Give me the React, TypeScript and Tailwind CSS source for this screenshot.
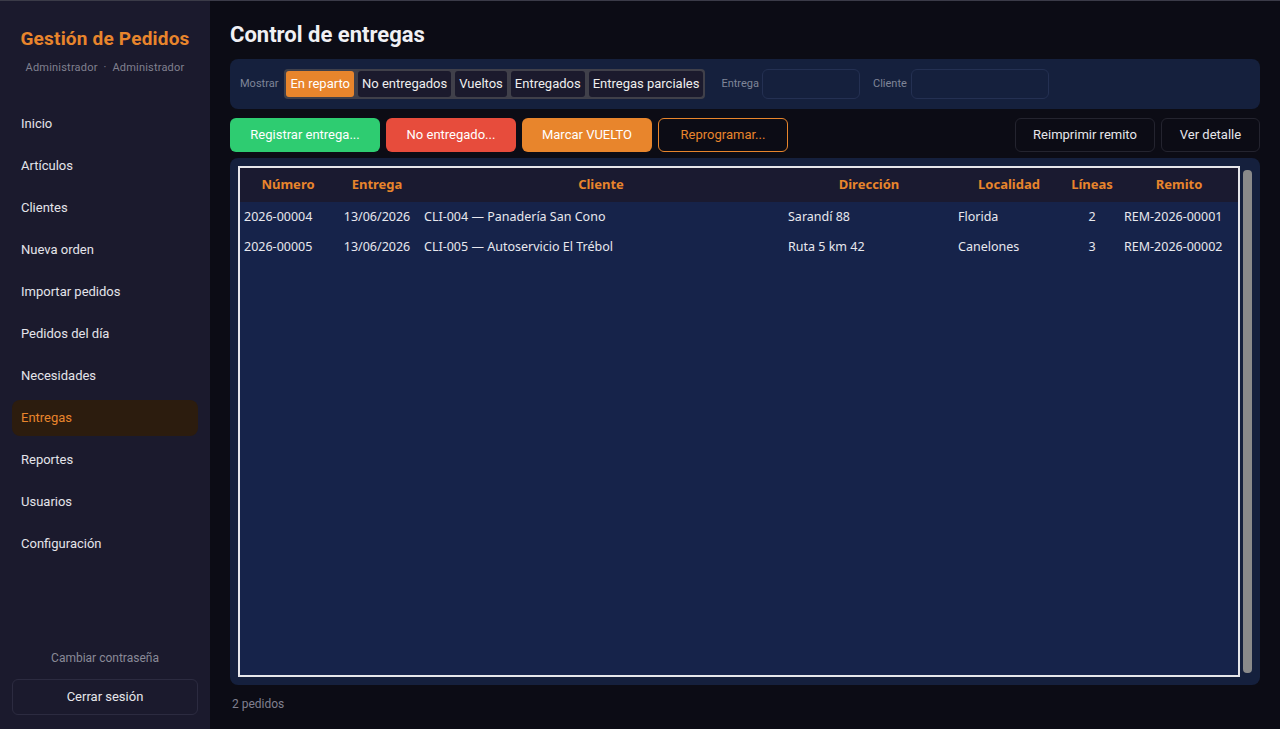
import { useState } from "react";

type Pedido = {
    numero: string;
    entrega: string;
    cliente: string;
    direccion: string;
    localidad: string;
    lineas: number;
    remito: string;
}

const navItems = [
    'Inicio', 'Artículos', 'Clientes', 'Nueva orden', 'Importar pedidos',
    'Pedidos del día', 'Necesidades', 'Entregas', 'Reportes', 'Usuarios', 'Configuración'
];

const filtros = ['En reparto', 'No entregados', 'Vueltos', 'Entregados', 'Entregas parciales'];

const pedidos: Pedido[] = [
    { numero: '2026-00004', entrega: '13/06/2026', cliente: 'CLI-004 — Panadería San Cono', direccion: 'Sarandí 88', localidad: 'Florida', lineas: 2, remito: 'REM-2026-00001' },
    { numero: '2026-00005', entrega: '13/06/2026', cliente: 'CLI-005 — Autoservicio El Trébol', direccion: 'Ruta 5 km 42', localidad: 'Canelones', lineas: 3, remito: 'REM-2026-00002' },
];

export default function App() {
    const [filtro, setFiltro] = useState('En reparto');

    return (
        <div className="flex h-[729px] w-[1280px] overflow-hidden border-t border-[#3b3b48] bg-[#0c0c15] font-['Roboto',sans-serif] text-[#e6e6ea]">

            {/* sidebar */}
            <aside className="flex w-[210px] shrink-0 flex-col bg-[#1b1a2d] px-3 pb-[14px]">
                <h1 className="mt-[24px] text-center text-[19px] font-bold tracking-[0.2px] text-[#e8852c]">Gestión de Pedidos</h1>
                <p className="mt-[6px] text-center text-[11px] tracking-[0.2px] text-[#80808f]">Administrador&nbsp;&nbsp;·&nbsp;&nbsp;Administrador</p>

                <nav className="mt-[30px] flex flex-col gap-[6px]">
                    {navItems.map(item => (
                        <div
                            key={item}
                            className={`flex h-[36px] items-center rounded-lg px-[9px] text-[13px] ${item === 'Entregas' ? 'bg-[#2c1c0e] text-[#e8852c]' : 'text-[#e4e4ea]'}`}
                        >
                            {item}
                        </div>
                    ))}
                </nav>

                <div className="flex-1" />
                <p className="text-center text-[12px] text-[#8a8a98]">Cambiar contraseña</p>
                <button className="mt-[12px] h-[36px] rounded-md border border-[#2c2b40] text-[13px] text-[#e6e6ea]">Cerrar sesión</button>
            </aside>

            {/* main */}
            <main className="flex flex-1 flex-col px-5 pt-[20px]">
                <h2 className="text-[22px] font-bold leading-[28px] text-[#f0f0f4]">Control de entregas</h2>

                {/* filtros */}
                <div className="mt-[10px] flex h-[50px] items-center rounded-lg bg-[#15203d] px-[10px] text-[11px] text-[#7f8598]">
                    <span>Mostrar</span>
                    <div className="ml-[6px] flex gap-[4px] rounded-[4px] bg-[#40404a] p-[2px]">
                        {filtros.map(f => (
                            <button
                                key={f}
                                onClick={() => setFiltro(f)}
                                className={`h-[26px] rounded-[3px] px-[4px] text-[13px] ${filtro === f ? 'bg-[#e8852c] text-white' : 'bg-[#1b1a2d] text-[#eeeeee]'}`}
                            >
                                {f}
                            </button>
                        ))}
                    </div>
                    <span className="ml-[16px]">Entrega</span>
                    <input className="ml-[3px] h-[30px] w-[98px] rounded-md border border-[#243052] bg-[#15203d] outline-none" />
                    <span className="ml-[13px]">Cliente</span>
                    <input className="ml-[4px] h-[30px] w-[138px] rounded-md border border-[#243052] bg-[#15203d] outline-none" />
                </div>

                {/* acciones */}
                <div className="mt-[9px] flex h-[34px] gap-[6px] text-[13px]">
                    <button className="w-[150px] rounded-md bg-[#2ecc71] text-white">Registrar entrega...</button>
                    <button className="w-[130px] rounded-md bg-[#e74c3c] text-white">No entregado...</button>
                    <button className="w-[130px] rounded-md bg-[#e8852c] text-white">Marcar VUELTO</button>
                    <button className="w-[130px] rounded-md border border-[#e8852c] text-[#e8852c]">Reprogramar...</button>
                    <div className="flex-1" />
                    <button className="w-[140px] rounded-md border border-[#24242f] text-[#e6e6ea]">Reimprimir remito</button>
                    <button className="w-[99px] rounded-md border border-[#24242f] text-[#e6e6ea]">Ver detalle</button>
                </div>

                {/* tabla */}
                <div className="mt-[6px] flex h-[527px] gap-[3px] rounded-lg bg-[#15203d] p-2 pr-[8px]">
                    <div className="flex-1 border-2 border-[#e6e6ea] bg-[#16234a] font-['Noto_Sans',sans-serif] text-[13px]">
                        <table className="w-full table-fixed border-collapse">
                            <colgroup>
                                <col className="w-[96px]" />
                                <col className="w-[82px]" />
                                <col className="w-[366px]" />
                                <col className="w-[170px]" />
                                <col className="w-[110px]" />
                                <col className="w-[56px]" />
                                <col />
                            </colgroup>
                            <thead>
                                <tr className="h-[34px] bg-[#1a1a30] text-[13px] font-bold text-[#e8852c]">
                                    <th>Número</th>
                                    <th>Entrega</th>
                                    <th>Cliente</th>
                                    <th>Dirección</th>
                                    <th>Localidad</th>
                                    <th>Líneas</th>
                                    <th>Remito</th>
                                </tr>
                            </thead>
                            <tbody className="text-[12.5px] text-[#e8e8ee]">
                                {pedidos.map(p => (
                                    <tr key={p.numero} className="h-[30px]">
                                        <td className="pl-[4px]">{p.numero}</td>
                                        <td className="text-center">{p.entrega}</td>
                                        <td className="pl-[6px]">{p.cliente}</td>
                                        <td className="pl-[4px]">{p.direccion}</td>
                                        <td className="pl-[4px]">{p.localidad}</td>
                                        <td className="text-center">{p.lineas}</td>
                                        <td className="pl-[4px]">{p.remito}</td>
                                    </tr>
                                ))}
                            </tbody>
                        </table>
                    </div>
                    <div className="mt-[4px] mb-[4px] w-[9px] rounded-sm bg-[#8a8a8a]" />
                </div>

                <p className="mt-[10px] pl-[2px] text-[12px] text-[#80808f]">2 pedidos</p>
            </main>
        </div>
    )
}
